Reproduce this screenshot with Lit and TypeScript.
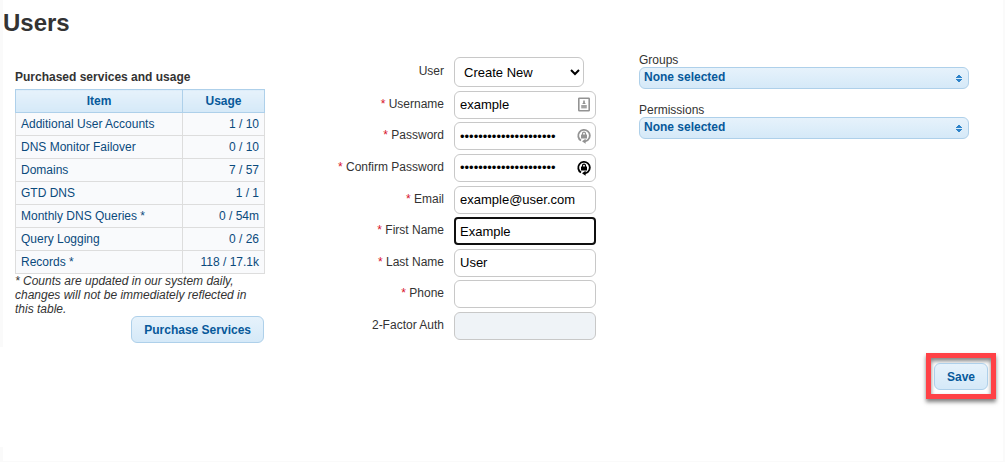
import { LitElement, html, css, svg, nothing } from "lit";
import { customElement } from "lit/decorators.js";
import { classMap } from "lit/directives/class-map.js";

interface Field {
  id: string;
  label: string;
  value: string;
  type?: string;
  required?: boolean;
  active?: boolean;
  disabled?: boolean;
  icon?: "card" | "lock";
  strong?: boolean;
}

const USAGE: [string, string][] = [
  ["Additional User Accounts", "1 / 10"],
  ["DNS Monitor Failover", "0 / 10"],
  ["Domains", "7 / 57"],
  ["GTD DNS", "1 / 1"],
  ["Monthly DNS Queries *", "0 / 54m"],
  ["Query Logging", "0 / 26"],
  ["Records *", "118 / 17.1k"],
];

const FIELDS: Field[] = [
  { id: "username", label: "Username", value: "example", required: true, icon: "card" },
  { id: "password", label: "Password", value: "examplepassword123456", type: "password", required: true, icon: "lock" },
  { id: "confirm", label: "Confirm Password", value: "examplepassword123456", type: "password", required: true, icon: "lock", strong: true },
  { id: "email", label: "Email", value: "example@user.com", required: true },
  { id: "first", label: "First Name", value: "Example", required: true, active: true },
  { id: "last", label: "Last Name", value: "User", required: true },
  { id: "phone", label: "Phone", value: "", type: "tel", required: true },
  { id: "twofactor", label: "2-Factor Auth", value: "", disabled: true },
];

const cardIcon = svg`
  <rect x="2.8" y="1.2" width="10.4" height="12.6" rx="0.6" fill="none" stroke="currentColor" stroke-width="1.6"/>
  <path d="M7.2 3.6h1.6v2l1 1.4H6.2l1-1.4z" fill="currentColor"/>
  <path d="M5.2 8h5.6v3.4H5.2z" fill="currentColor" opacity="0.85"/>`;

const lockIcon = svg`
  <path d="M5 12.6A5.8 5.8 0 1 1 12 11.9Q11 13 8.6 13.3" fill="none" stroke="currentColor" stroke-width="1.8"/>
  <path d="M9.6 10.8v5L6 13.3z" fill="currentColor"/>
  <path d="M6.5 7V5.7a1.5 1.5 0 0 1 3 0V7" fill="none" stroke="currentColor" stroke-width="1.2"/>
  <rect x="5" y="6.6" width="6" height="4" rx="0.4" fill="currentColor"/>`;

@customElement("app-root")
export class AppRoot extends LitElement {
  static styles = css`
    :host {
      display: block;
      font: 12px/14px "Liberation Sans", Arial, sans-serif;
      color: #333;
    }
    .page {
      box-sizing: border-box;
      min-height: 100vh;
      padding: 9px 9px 0 3px;
      background:
        linear-gradient(#fff, #fff) 0 347px / 3px 100px no-repeat,
        linear-gradient(#fafafa, #fafafa) left / 3px 100% no-repeat,
        linear-gradient(#fafafa, #fafafa) right / 2px 100% no-repeat,
        linear-gradient(#fafafa, #fafafa) bottom / 100% 1px no-repeat,
        #fff;
    }
    h1 {
      margin: 0;
      font-size: 24px;
      line-height: 28px;
    }
    .columns {
      display: grid;
      grid-template-columns: 250px 288px minmax(0, 1fr);
      column-gap: 43px;
      align-items: start;
      padding: 16px 27px 0 12px;
    }
    .services {
      padding-top: 17px;
    }
    h2 {
      margin: 0 0 5px;
      font-size: 12px;
      line-height: 14px;
    }
    table {
      width: 100%;
      border-collapse: collapse;
    }
    th,
    td {
      padding: 4px 5px;
      border: 1px solid #ddd;
    }
    th {
      border-color: #aed0ea;
      background: linear-gradient(#e6f2fb, #d5e9f8);
      color: #07599a;
    }
    td {
      background: #f9fafc;
      color: #0b4a7c;
    }
    .item {
      width: 156px;
    }
    .count {
      text-align: right;
    }
    .note {
      margin: 0;
      font-style: italic;
    }
    .purchase {
      display: flex;
      justify-content: flex-end;
      padding-right: 1px;
    }
    button {
      height: 27px;
      padding: 0 12px;
      border: 1px solid #aed0ea;
      border-radius: 6px;
      background: linear-gradient(#e6f2fb, #d5e9f8);
      color: #07599a;
      font: bold 12px/14px "Liberation Sans", Arial, sans-serif;
    }
    .form {
      display: flex;
      flex-direction: column;
      justify-content: space-between;
      min-height: 283px;
      margin-top: 4px;
    }
    .field {
      display: grid;
      grid-template-columns: minmax(0, 1fr) 142px;
      column-gap: 10px;
      align-items: center;
    }
    .field label {
      padding-bottom: 2px;
      text-align: right;
    }
    .required {
      color: #d8132c;
    }
    .control {
      position: relative;
      display: flex;
    }
    input,
    .user {
      box-sizing: border-box;
      width: 100%;
      height: 28px;
      margin: 0;
      padding: 0 5px;
      border: 1px solid #c8c8c8;
      border-radius: 6px;
      background: #fff;
      color: #000;
      font: 13px/16px "Liberation Sans", Arial, sans-serif;
    }
    .user {
      width: 130px;
      height: 30px;
    }
    input.active {
      padding: 0 4px;
      border: 2px solid #101010;
      border-radius: 4px;
      outline: none;
    }
    input:disabled {
      background: #eff3f7;
    }
    .badge {
      position: absolute;
      top: 6px;
      right: 4px;
      width: 16px;
      height: 16px;
      color: #939393;
    }
    .badge.strong {
      color: #000;
    }
    .access {
      display: flex;
      flex-direction: column;
      gap: 14px;
    }
    .picker {
      display: flex;
      flex-direction: column;
    }
    .picker select {
      box-sizing: border-box;
      width: 100%;
      height: 22px;
      margin: 0;
      padding: 0 24px 2px 4px;
      appearance: none;
      border: 1px solid #aed0ea;
      border-radius: 6px;
      background: linear-gradient(#e6f2fb, #d5e9f8);
      color: #07599a;
      font: bold 12px/14px "Liberation Sans", Arial, sans-serif;
    }
    .arrows {
      position: absolute;
      top: 8px;
      right: 7px;
      width: 6px;
      height: 7px;
      fill: #2d83c9;
      pointer-events: none;
    }
    .actions {
      display: flex;
      justify-content: flex-end;
      padding-top: 10px;
    }
    .highlight {
      display: flex;
      padding: 5px 3px 4px;
      border: 5px solid #ff4146;
      box-shadow:
        0 3px 4px rgba(0, 0, 0, 0.5),
        inset 0 3px 4px rgba(0, 0, 0, 0.5);
    }
  `;

  private renderField(f: Field) {
    return html`
      <div class="field">
        <label for=${f.id}>${f.required ? html`<span class="required">*</span> ` : nothing}${f.label}</label>
        <div class="control">
          <input
            id=${f.id}
            class=${classMap({ active: !!f.active })}
            type=${f.type ?? "text"}
            autocomplete="off"
            .value=${f.value}
            ?disabled=${!!f.disabled}
          />
          ${f.icon
            ? html`<svg class=${classMap({ badge: true, strong: !!f.strong })} viewBox="0 0 16 16" aria-hidden="true">
                ${f.icon === "card" ? cardIcon : lockIcon}
              </svg>`
            : nothing}
        </div>
      </div>
    `;
  }

  private renderPicker(id: string, label: string) {
    return html`
      <div class="picker">
        <label for=${id}>${label}</label>
        <div class="control">
          <select id=${id}>
            <option>None selected</option>
          </select>
          <svg class="arrows" viewBox="0 0 6 7" aria-hidden="true">
            <path d="M2 0h2v1h1v1h1v1H0V2h1V1h1zM0 4h6v1H5v1H4v1H2V6H1V5H0z" />
          </svg>
        </div>
      </div>
    `;
  }

  render() {
    return html`
      <main class="page">
        <h1>Users</h1>
        <div class="columns">
          <section class="services">
            <h2>Purchased services and usage</h2>
            <table>
              <thead>
                <tr>
                  <th class="item">Item</th>
                  <th>Usage</th>
                </tr>
              </thead>
              <tbody>
                ${USAGE.map(([item, usage]) => html`<tr><td>${item}</td><td class="count">${usage}</td></tr>`)}
              </tbody>
            </table>
            <p class="note">
              * Counts are updated in our system daily, changes will not be immediately reflected in this table.
            </p>
            <div class="purchase"><button type="button">Purchase Services</button></div>
          </section>
          <form class="form">
            <div class="field">
              <label for="user">User</label>
              <div class="control">
                <select id="user" class="user">
                  <option>Create New</option>
                </select>
              </div>
            </div>
            ${FIELDS.map((f) => this.renderField(f))}
          </form>
          <section class="access">
            ${this.renderPicker("groups", "Groups")} ${this.renderPicker("permissions", "Permissions")}
          </section>
        </div>
        <div class="actions">
          <div class="highlight"><button type="button">Save</button></div>
        </div>
      </main>
    `;
  }
}
